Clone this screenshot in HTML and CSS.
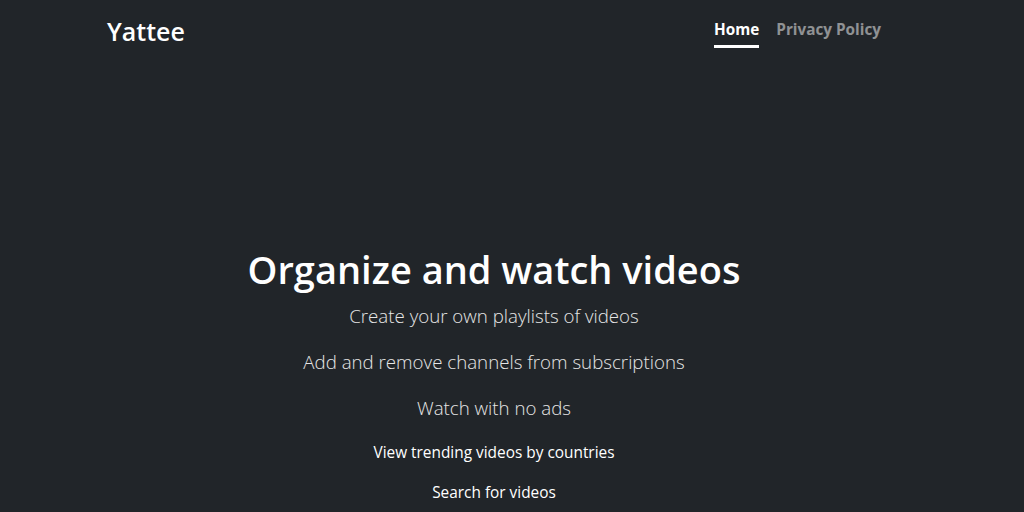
FILE: index.html
```html
<!DOCTYPE html>
<html lang="en">
<head>
<meta charset="utf-8">
<title>Yattee</title>
<link rel="stylesheet" href="styles.css">
</head>
<body>
<div class="page">
  <header class="masthead">
    <h3 class="brand">Yattee</h3>
    <nav class="nav">
      <a class="nav-link active" href="#">Home</a>
      <a class="nav-link" href="#">Privacy Policy</a>
    </nav>
  </header>
  <main class="cover">
    <h1 class="title">Organize and watch videos</h1>
    <p class="lead">Create your own playlists of videos</p>
    <p class="lead">Add and remove channels from subscriptions</p>
    <p class="lead lead-last">Watch with no ads</p>
    <p class="item">View trending videos by countries</p>
    <p class="item">Search for videos</p>
  </main>
</div>
</body>
</html>
```
FILE: styles.css
```css
html, body {
  margin: 0;
  padding: 0;
  background: #212529;
  color: #fff;
  font-family: "Open Sans", "Noto Sans", sans-serif;
}
.page {
  width: 988px;
}
.masthead {
  width: 774px;
  margin: 0 auto;
  display: flex;
  justify-content: space-between;
  align-items: flex-start;
  padding-top: 16px;
}
.brand {
  margin: 0;
  font-size: 25px;
  font-weight: 600;
  line-height: 30px;
}
.nav {
  display: flex;
  gap: 17px;
  margin-top: -1px;
}
.nav-link {
  color: rgba(255, 255, 255, 0.5);
  text-decoration: none;
  font-weight: 700;
  font-size: 15.3px;
  line-height: 24px;
  padding: 2px 0 4px;
  border-bottom: 3px solid transparent;
}
.nav-link.active {
  color: #fff;
  border-bottom-color: #fff;
}
.cover {
  text-align: center;
  padding-top: 197px;
}
.title {
  margin: 0 0 8px;
  font-size: 38px;
  font-weight: 600;
  line-height: 48px;
}
.lead {
  margin: 0 0 16px;
  font-size: 18.7px;
  font-weight: 300;
  line-height: 30px;
  color: #e6e6e6;
}
.lead-last {
  margin-bottom: 18px;
}
.item {
  margin: 0 0 16px;
  font-size: 15.4px;
  line-height: 24px;
}
```
